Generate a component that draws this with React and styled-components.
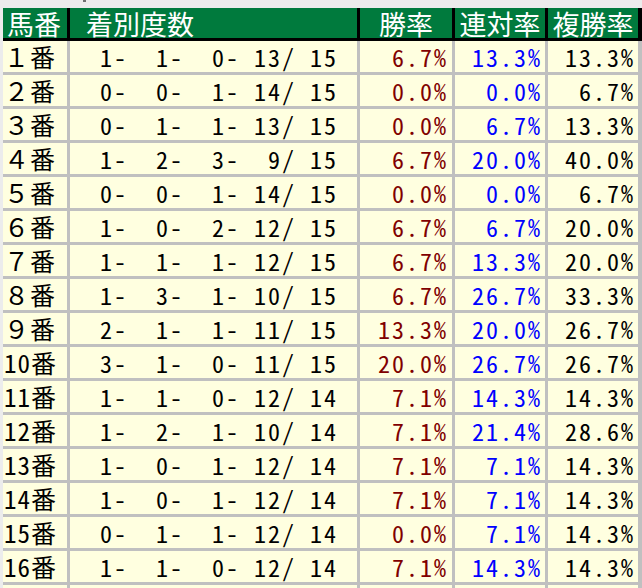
import React from "react";
import styled, { createGlobalStyle } from "styled-components";

const Global = createGlobalStyle`
  html, body { margin: 0; padding: 0; background: #ececec; }
  body { font-family: "Noto Sans Mono CJK JP", "Noto Sans CJK JP", monospace; }
`;

const COLS = "64px 287px 92px 90px 90px";

const Page = styled.div`
  width: 642px;
  height: 588px;
  overflow: hidden;
  background: #ececec;
  padding: 8px 0 0 3px;
  box-sizing: border-box;
  position: relative;
`;

const Mark = styled.span`
  position: absolute;
  left: 83px;
  top: 0;
  width: 3px;
  height: 2px;
  background: #707070;
`;

const Header = styled.div`
  display: grid;
  grid-template-columns: ${COLS};
  column-gap: 3px;
  width: 638px;
  background: #000;
  padding-right: 3px;
  border-bottom: 3px solid #000;
`;

const HeadCell = styled.div`
  height: 30px;
  display: flex;
  align-items: center;
  justify-content: ${(p) => p.$justify || "center"};
  background: #007a3d;
  color: #fff;
  font-size: 27px;
  line-height: 1;
  white-space: pre;
  padding: ${(p) => p.$pad || "0"};
`;

const Body = styled.div`
  display: grid;
  row-gap: 3px;
  width: 641px;
  background: #c0c0c0;
`;

const Row = styled.div`
  display: grid;
  grid-template-columns: ${COLS};
  column-gap: 3px;
  padding-right: 3px;
  background: #c0c0c0;
`;

const Cell = styled.div`
  height: 31px;
  display: flex;
  align-items: center;
  justify-content: ${(p) => p.$justify || "flex-end"};
  background: #ffffe0;
  color: ${(p) => p.$color || "#000"};
  font-size: ${(p) => p.$size || 24}px;
  letter-spacing: ${(p) => p.$ls ?? 2}px;
  line-height: 1;
  white-space: pre;
  padding: ${(p) => p.$pad || "0"};
`;

const rows = [
  ["１", [1, 1, 0, 13, 15], "6.7%", "13.3%", "13.3%"],
  ["２", [0, 0, 1, 14, 15], "0.0%", "0.0%", "6.7%"],
  ["３", [0, 1, 1, 13, 15], "0.0%", "6.7%", "13.3%"],
  ["４", [1, 2, 3, 9, 15], "6.7%", "20.0%", "40.0%"],
  ["５", [0, 0, 1, 14, 15], "0.0%", "0.0%", "6.7%"],
  ["６", [1, 0, 2, 12, 15], "6.7%", "6.7%", "20.0%"],
  ["７", [1, 1, 1, 12, 15], "6.7%", "13.3%", "20.0%"],
  ["８", [1, 3, 1, 10, 15], "6.7%", "26.7%", "33.3%"],
  ["９", [2, 1, 1, 11, 15], "13.3%", "20.0%", "26.7%"],
  ["10", [3, 1, 0, 11, 15], "20.0%", "26.7%", "26.7%"],
  ["11", [1, 1, 0, 12, 14], "7.1%", "14.3%", "14.3%"],
  ["12", [1, 2, 1, 10, 14], "7.1%", "21.4%", "28.6%"],
  ["13", [1, 0, 1, 12, 14], "7.1%", "7.1%", "14.3%"],
  ["14", [1, 0, 1, 12, 14], "7.1%", "7.1%", "14.3%"],
  ["15", [0, 1, 1, 12, 14], "0.0%", "7.1%", "14.3%"],
  ["16", [1, 1, 0, 12, 14], "7.1%", "14.3%", "14.3%"],
];

const p2 = (n) => String(n).padStart(2, " ");
const fmt = ([a, b, c, d, e]) =>
  `${p2(a)}- ${p2(b)}- ${p2(c)}- ${p2(d)}/ ${p2(e)}`;

export default function App() {
  return (
    <>
      <Global />
      <Page>
        <Mark />
        <Header>
          <HeadCell $justify="flex-start" $pad="0 0 0 4px">馬番</HeadCell>
          <HeadCell $justify="flex-start" $pad="0 0 0 16px">着別度数</HeadCell>
          <HeadCell>勝率</HeadCell>
          <HeadCell>連対率</HeadCell>
          <HeadCell>複勝率</HeadCell>
        </Header>
        <Body>
          {rows.map(([no, counts, win, ren, fuku], i) => (
            <Row key={i}>
              <Cell $justify="flex-start" $pad="0 0 0 1px" $size={25} $ls={1}>
                {no + "番"}
              </Cell>
              <Cell $justify="flex-start" $pad="0 0 0 16px">{fmt(counts)}</Cell>
              <Cell $color="#800000" $pad="0 4px 0 0">{win}</Cell>
              <Cell $color="#0000ff" $pad="0 3px 0 0">{ren}</Cell>
              <Cell $pad="0 3px 0 0">{fuku}</Cell>
            </Row>
          ))}
          <Row>
            <Cell />
            <Cell />
            <Cell />
            <Cell />
            <Cell />
          </Row>
        </Body>
      </Page>
    </>
  );
}
